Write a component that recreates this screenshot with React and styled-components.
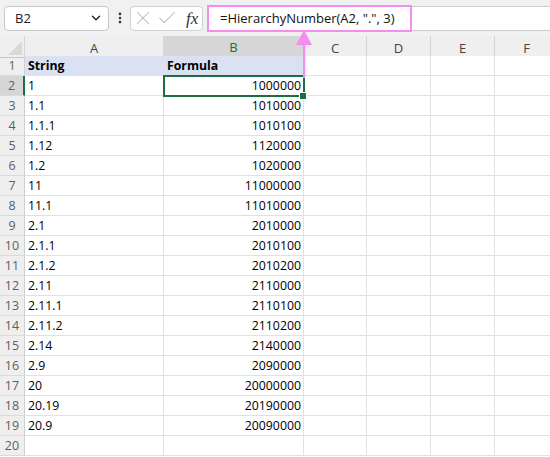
import React from 'react';
import styled, { createGlobalStyle } from 'styled-components';
import { ChevronDown, EllipsisVertical, X, Check } from 'lucide-react';

const Global = createGlobalStyle`
  html, body { margin: 0; padding: 0; background: #fff; overflow: hidden; }
  body { font-family: "Open Sans", "Noto Sans", sans-serif; }
  * { box-sizing: border-box; }
`;

const PINK = '#f58cf0';
const GREEN = '#1f6e43';
const COLS = '25px 139px 140px 63px 64px 64px 64px';

const Page = styled.div`
  position: relative;
  width: 550px;
  height: 457px;
  overflow: hidden;
  background: #fff;
`;

const Toolbar = styled.div`
  height: 36px;
  display: flex;
  align-items: center;
  padding-left: 4px;
  background: #f1f1f1;
`;

const NameBox = styled.div`
  width: 105px;
  height: 25px;
  display: flex;
  align-items: center;
  justify-content: space-between;
  padding: 0 5px 0 10px;
  background: #fff;
  border: 1px solid #c8c8c8;
  border-radius: 4px;
  font-size: 13px;
  color: #222;
`;

const Dots = styled.div`
  width: 21px;
  display: flex;
  justify-content: center;
  color: #333;
`;

const FxBox = styled.div`
  width: 73px;
  height: 25px;
  display: flex;
  align-items: center;
  padding-left: 1px;
  gap: 2px;
  background: #fff;
  border: 1px solid #d2d2d2;
  border-radius: 4px;
  color: #b7b7b7;
`;

const FxLabel = styled.span`
  font-family: "Liberation Serif", "DejaVu Serif", serif;
  font-style: italic;
  font-size: 17px;
  color: #333;
  margin-left: 6px;
  line-height: 1;
`;

const FormulaBar = styled.div`
  flex: 1;
  display: flex;
  align-items: center;
  margin-left: 4px;
  height: 27px;
`;

const Highlight = styled.div`
  width: 205px;
  height: 27px;
  display: flex;
  align-items: center;
  padding-left: 11px;
  background: #fff;
  border: 2.5px solid ${PINK};
  font-size: 13px;
  color: #111;
  white-space: nowrap;
`;

const FormulaRest = styled.div`
  flex: 1;
  height: 25px;
  background: #fff;
  border-top: 1px solid #cdcdcd;
  border-bottom: 1px solid #cdcdcd;
`;

const Sheet = styled.div`
  display: flex;
  flex-direction: column;
`;

const Row = styled.div`
  display: grid;
  grid-template-columns: ${COLS};
  height: 20px;
`;

const Corner = styled.div`
  position: relative;
  background: #efefef;
  border-right: 1px solid #d4d4d4;
  border-bottom: 1px solid #c8c8c8;
  &::after {
    content: '';
    position: absolute;
    right: 2px;
    bottom: 2px;
    border-style: solid;
    border-width: 0 0 14px 14px;
    border-color: transparent transparent #d9d9d9 transparent;
  }
`;

const ColHead = styled.div`
  display: flex;
  align-items: center;
  justify-content: center;
  padding-top: 2px;
  font-size: 13px;
  background: ${p => (p.$sel ? '#d6d6d6' : '#efefef')};
  color: ${p => (p.$sel ? GREEN : '#444')};
  border-right: 1px solid #d4d4d4;
  border-bottom: ${p => (p.$sel ? `2px solid ${GREEN}` : '1px solid #c8c8c8')};
`;

const RowHead = styled.div`
  display: flex;
  align-items: center;
  justify-content: center;
  font-size: 12.5px;
  color: #5e5e5e;
  background: ${p => (p.$sel ? '#d6d6d6' : '#efefef')};
  border-right: ${p => (p.$sel ? `2px solid ${GREEN}` : '1px solid #d0d0d0')};
  border-bottom: 1px solid #dadada;
`;

const Cell = styled.div`
  position: relative;
  display: flex;
  align-items: center;
  justify-content: ${p => (p.$right ? 'flex-end' : 'flex-start')};
  padding: 0 2px 0 3px;
  font-size: 12.3px;
  font-weight: ${p => (p.$bold ? 700 : 400)};
  color: #000;
  white-space: nowrap;
  background: ${p => (p.$head ? '#d9e1f2' : '#fff')};
  border-right: 1px solid #e1e1e1;
  border-bottom: 1px solid #e1e1e1;
  ${p =>
    p.$sel &&
    `
    outline: 2px solid ${GREEN};
    outline-offset: -1px;
    z-index: 2;
  `}
`;

const FillHandle = styled.span`
  position: absolute;
  right: -3px;
  bottom: -4px;
  width: 6px;
  height: 6px;
  background: ${GREEN};
  border: 1px solid #fff;
  box-sizing: content-box;
  margin: -1px;
`;

const Arrow = styled.svg`
  position: absolute;
  left: 295px;
  top: 29px;
  z-index: 5;
  pointer-events: none;
`;

const data = [
  ['1', '1000000'],
  ['1.1', '1010000'],
  ['1.1.1', '1010100'],
  ['1.12', '1120000'],
  ['1.2', '1020000'],
  ['11', '11000000'],
  ['11.1', '11010000'],
  ['2.1', '2010000'],
  ['2.1.1', '2010100'],
  ['2.1.2', '2010200'],
  ['2.11', '2110000'],
  ['2.11.1', '2110100'],
  ['2.11.2', '2110200'],
  ['2.14', '2140000'],
  ['2.9', '2090000'],
  ['20', '20000000'],
  ['20.19', '20190000'],
  ['20.9', '20090000'],
  ['', ''],
];

const letters = ['A', 'B', 'C', 'D', 'E', 'F'];

export default function App() {
  return (
    <Page>
      <Global />
      <Toolbar>
        <NameBox>
          <span>B2</span>
          <ChevronDown size={14} strokeWidth={2.4} color="#222" />
        </NameBox>
        <Dots>
          <EllipsisVertical size={14} strokeWidth={2.6} />
        </Dots>
        <FxBox>
          <X size={22} strokeWidth={1.1} />
          <Check size={22} strokeWidth={1.1} />
          <FxLabel>fx</FxLabel>
        </FxBox>
        <FormulaBar>
          <Highlight>=HierarchyNumber(A2, ".", 3)</Highlight>
          <FormulaRest />
        </FormulaBar>
      </Toolbar>
      <Sheet>
        <Row>
          <Corner />
          {letters.map(l => (
            <ColHead key={l} $sel={l === 'B'}>{l}</ColHead>
          ))}
        </Row>
        <Row>
          <RowHead>1</RowHead>
          <Cell $head $bold>String</Cell>
          <Cell $head $bold>Formula</Cell>
          <Cell /><Cell /><Cell /><Cell />
        </Row>
        {data.map(([a, b], i) => {
          const n = i + 2;
          const sel = n === 2;
          return (
            <Row key={n}>
              <RowHead $sel={sel}>{n}</RowHead>
              <Cell>{a}</Cell>
              <Cell $right $sel={sel}>
                {b}
                {sel && <FillHandle />}
              </Cell>
              <Cell /><Cell /><Cell /><Cell />
            </Row>
          );
        })}
      </Sheet>
      <Arrow width="18" height="49" viewBox="0 0 18 49">
        <polygon points="9,1 1,16 17,16" fill={PINK} />
        <rect x="8" y="14" width="2.2" height="35" fill={PINK} />
      </Arrow>
    </Page>
  );
}
